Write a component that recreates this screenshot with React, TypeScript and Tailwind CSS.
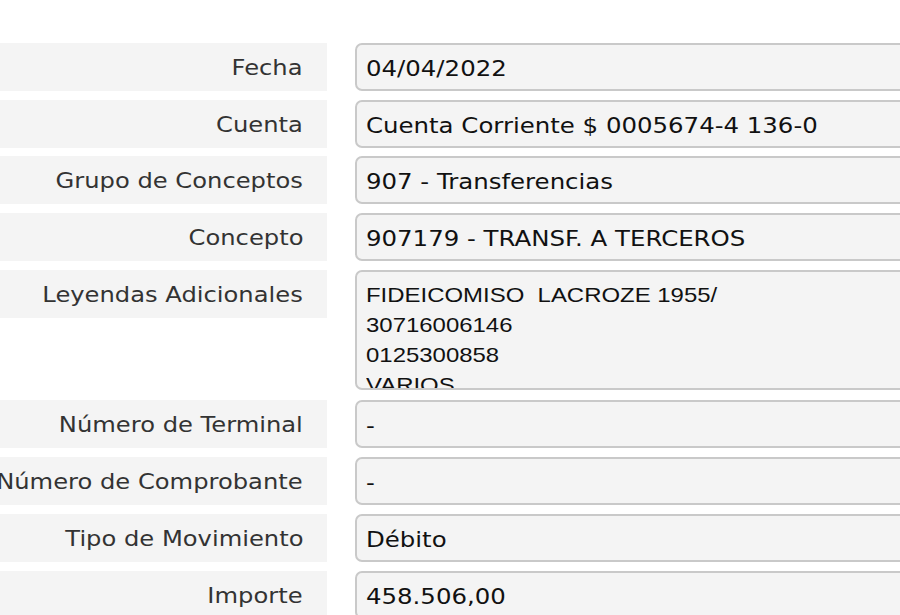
import React from "react";

const rows: { label: string; value: string }[] = [
  { label: "Fecha", value: "04/04/2022" },
  { label: "Cuenta", value: "Cuenta Corriente $ 0005674-4 136-0" },
  { label: "Grupo de Conceptos", value: "907 - Transferencias" },
  { label: "Concepto", value: "907179 - TRANSF. A TERCEROS" },
];

const rows2: { label: string; value: string }[] = [
  { label: "Número de Terminal", value: "-" },
  { label: "Número de Comprobante", value: "-" },
  { label: "Tipo de Movimiento", value: "Débito" },
  { label: "Importe", value: "458.506,00" },
];

function Label({ text }: { text: string }) {
  return (
    <div className="w-[327px] shrink-0 h-[48px] bg-[#f4f4f4] flex items-center justify-end pr-[24px] pt-[1px] whitespace-nowrap text-[22px] text-[#333333] font-['DejaVu_Sans',sans-serif]">
      <span className="inline-block origin-right scale-x-[1.1]">{text}</span>
    </div>
  );
}

function Row({ label, value }: { label: string; value: string }) {
  return (
    <div className="flex items-start gap-[28px] h-[48px]">
      <Label text={label} />
      <div className="flex-1 min-w-0 h-[48px] mr-[-20px] bg-[#f4f4f4] border-2 border-[#c9c9c9] rounded-[7px] flex items-center pl-[9px] pt-[3px] whitespace-nowrap text-[22px] text-[#111111] font-['DejaVu_Sans',sans-serif]">
        <span className="inline-block origin-left scale-x-[1.11]">{value}</span>
      </div>
    </div>
  );
}

export default function App() {
  return (
    <div className="w-[900px] h-[615px] overflow-hidden bg-white pt-[43px] flex flex-col gap-[8.7px]">
      {rows.map((r) => (
        <Row key={r.label} {...r} />
      ))}
      <div className="flex items-start gap-[28px] mb-[2px]">
        <Label text="Leyendas Adicionales" />
        <div className="flex-1 min-w-0 h-[120px] mr-[-20px] bg-[#f4f4f4] border-2 border-[#c9c9c9] rounded-[7px] overflow-hidden pl-[9px] pt-[8px] text-[21px] leading-[30px] text-[#111111] font-['Liberation_Sans',sans-serif] whitespace-pre">
          <div className="origin-left scale-x-[1.14]">FIDEICOMISO  LACROZE 1955/</div>
          <div className="origin-left scale-x-[1.14]">30716006146</div>
          <div className="origin-left scale-x-[1.14]">0125300858</div>
          <div className="origin-left scale-x-[1.14]">VARIOS</div>
        </div>
      </div>
      {rows2.map((r) => (
        <Row key={r.label} {...r} />
      ))}
    </div>
  );
}
